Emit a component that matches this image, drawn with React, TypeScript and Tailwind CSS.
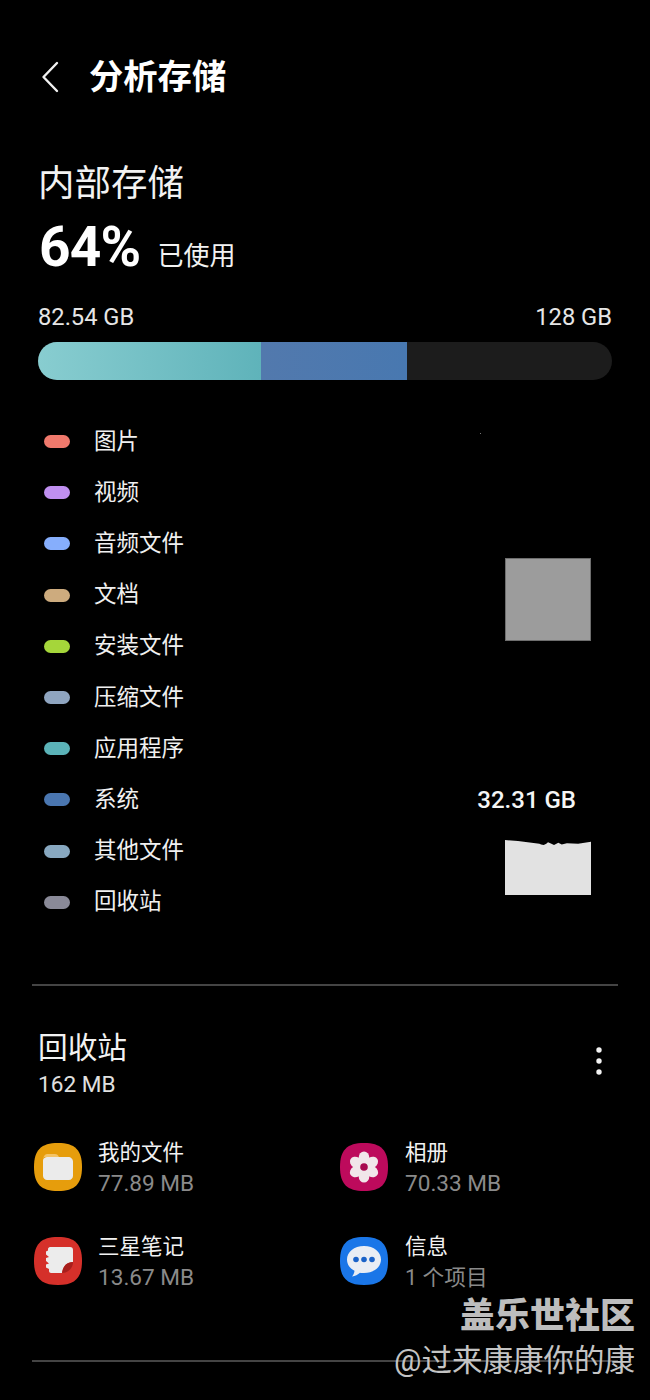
const cjk = "font-['Roboto','Noto_Sans_CJK_SC',sans-serif]";

const legend: [string, string][] = [
  ["图片", "bg-[#f0796c]"],
  ["视频", "bg-[#c08ff0]"],
  ["音频文件", "bg-[#86aefc]"],
  ["文档", "bg-[#cdab7e]"],
  ["安装文件", "bg-[#a5d63a]"],
  ["压缩文件", "bg-[#8fa5c0]"],
  ["应用程序", "bg-[#5bb3b8]"],
  ["系统", "bg-[#4a76b0]"],
  ["其他文件", "bg-[#88a8c0]"],
  ["回收站", "bg-[#8a8a98]"],
];

const squircle = "M24 0C41 0 48 7 48 24S41 48 24 48 0 41 0 24 7 0 24 0Z";

function FolderIcon() {
  return (
    <svg width="48" height="48" viewBox="0 0 48 48">
      <path d={squircle} fill="#e69d0c" />
      <path d="M9 17c0-3 2-6 4-6h8c2 0 3 1 4 3h-16Z" fill="#f4c467" />
      <path d="M9 18c0-3 2-4 5-4h20c3 0 5 2 5 5v14c0 2-2 4-4 4H13c-2 0-4-2-4-4Z" fill="#ebebeb" />
    </svg>
  );
}

function FlowerIcon() {
  const petals = [0, 60, 120, 180, 240, 300];
  return (
    <svg width="48" height="48" viewBox="0 0 48 48">
      <path d={squircle} fill="#bd0a5c" />
      {petals.map((a) => (
        <ellipse key={a} cx="24" cy="15" rx="5.400" ry="6.600" fill="#f1e6ea" transform={`rotate(${a} 24 24)`} />
      ))}
      <circle cx="24" cy="24" r="3.800" fill="#a80a50" />
    </svg>
  );
}

function NotesIcon() {
  return (
    <svg width="48" height="48" viewBox="0 0 48 48">
      <path d={squircle} fill="#d5302a" />
      <path d="M14 12c0-1 1-2 2-2h20c2 0 3 1 3 3v12c-6 0-10 4-11 11H17c-1 0-2-1-2-2v-2l-3-1.500v-3l3-1-3-2.500v-3l3-1-3-2.500v-3l2-1Z" fill="#ececec" />
      <path d="M39 25c0 6-5 11-11 11 1-7 5-11 11-11Z" fill="#a81f1c" />
    </svg>
  );
}

function MessageIcon() {
  return (
    <svg width="48" height="48" viewBox="0 0 48 48">
      <path d={squircle} fill="#1a76e8" />
      <path d="M24 9c10 0 17 6 17 13.500S34 36 24 36c-2 0-3 0-4-.3-2 2-5 3.300-8 3.800 1.500-1.800 2.300-3.500 2.500-5.800C10 31.500 7 27.500 7 22.500 7 15 14 9 24 9Z" fill="#e9edf4" />
      <circle cx="16" cy="22.500" r="2.800" fill="#1a62c8" />
      <circle cx="24" cy="22.500" r="2.800" fill="#1a62c8" />
      <circle cx="32" cy="22.500" r="2.800" fill="#1a62c8" />
    </svg>
  );
}

function AppItem({ icon, name, size, wide, small }: { icon: React.ReactNode; name: string; size: string; wide?: boolean; small?: boolean }) {
  return (
    <div className="flex h-[94px] items-start">
      <div className="mt-[6px] h-12 w-12 shrink-0">{icon}</div>
      <div className={`flex flex-col ${wide ? "ml-[17px]" : "ml-4"}`}>
        <span className="text-[21.5px] leading-[31px] text-[#f2f2f2]">{name}</span>
        <span className={`leading-[31px] text-[#8a8a8a] ${small ? "text-[21.7px]" : "text-[22.6px]"}`}>{size}</span>
      </div>
    </div>
  );
}

export default function App() {
  return (
    <div className={`relative h-[1400px] w-[650px] overflow-hidden bg-black text-white ${cjk}`}>
      {/* header */}
      <div className="flex h-[156px] items-start pl-[41px] pt-[57px]">
        <svg width="18" height="32" viewBox="0 0 18 32" fill="none" className="mt-[4px]">
          <path d="M16 2 2.500 16 16 30" stroke="#f2f2f2" strokeWidth="2.400" strokeLinecap="round" strokeLinejoin="round" />
        </svg>
        <h1 className="ml-[30px] text-[34.3px] font-bold leading-[40px]">分析存储</h1>
      </div>

      {/* summary */}
      <div className="pl-[38px]">
        <div className="text-[36.5px] leading-[56px] text-[#f2f2f2]">内部存储</div>
        <div className="mt-[2px] flex h-[66px] items-end pl-px">
          <span className="text-[55px] font-bold leading-[66px] tracking-[-0.8px]">64%</span>
          <span className="mb-[6px] ml-[17px] text-[26px] leading-[36px] text-[#f2f2f2]">已使用</span>
        </div>
      </div>

      {/* capacity */}
      <div className="mt-[22px] px-[38px]">
        <div className="flex h-[32px] items-center justify-between text-[23.7px] text-[#e6e6e6]">
          <span>82.54 GB</span>
          <span>128 GB</span>
        </div>
        <div className="mt-[8px] flex h-[38px] w-[574px] overflow-hidden rounded-full bg-[#1c1c1c]">
          <div className="h-full w-[223px] bg-gradient-to-r from-[#88cdd0] to-[#5fb3ba]" />
          <div className="h-full w-[146px] bg-gradient-to-r from-[#5279ad] to-[#4878b0]" />
        </div>
      </div>

      {/* legend */}
      <div className="mt-[36px] pl-[44px] pr-[74px]">
        {legend.map(([label, color]) => (
          <div key={label} className="flex h-[51.2px] items-center">
            <span className={`h-[13px] w-[26px] rounded-full ${color}`} />
            <span className="ml-[24px] flex-1 text-[22.5px] text-[#f0f0f0]">{label}</span>
            {label === "系统" && <span className="text-[24px] font-medium text-[#f5f5f5]">32.31 GB</span>}
          </div>
        ))}
      </div>

      {/* divider */}
      <div className="mx-[32px] mt-[56px] h-[2px] bg-[#444444]" />

      {/* trash */}
      <div className="flex items-start justify-between pl-[38px] pr-[44px] pt-[39px]">
        <div>
          <div className="text-[29.7px] leading-[46px] text-[#f2f2f2]">回收站</div>
          <div className="text-[22.6px] leading-[28px] text-[#e0e0e0]">162 MB</div>
        </div>
        <svg width="14" height="28" viewBox="0 0 14 28" className="mt-[22px]">
          <circle cx="7" cy="3" r="2.700" fill="#f2f2f2" />
          <circle cx="7" cy="14" r="2.700" fill="#f2f2f2" />
          <circle cx="7" cy="25" r="2.700" fill="#f2f2f2" />
        </svg>
      </div>

      <div className="mt-[38px] grid grid-cols-[306px_1fr] pl-[34px]">
        <AppItem icon={<FolderIcon />} name="我的文件" size="77.89 MB" />
        <AppItem icon={<FlowerIcon />} name="相册" size="70.33 MB" wide />
        <AppItem icon={<NotesIcon />} name="三星笔记" size="13.67 MB" />
        <AppItem icon={<MessageIcon />} name="信息" size="1 个项目" wide small />
      </div>

      <div className="mx-[32px] mt-[35px] h-[2px] bg-[#444444]" />

      {/* redaction patches */}
      <div className="absolute left-[505px] top-[558px] h-[83px] w-[86px] border border-[#6e6e6e] bg-[#9c9c9c]" />
      <div className="absolute left-[505px] top-[840px] h-[55px] w-[86px] bg-[#e2e2e2] [clip-path:polygon(0_0,15%_2%,40%_7%,42%_8%,45%_9%,48%_7%,50%_4%,54%_7%,57%_9%,62%_5%,66%_8%,72%_6%,85%_7%,100%_3%,100%_100%,0_100%)]" />
      <div className="absolute left-[480px] top-[433px] h-px w-px bg-[#777777]" />

      {/* watermark */}
      <div className="absolute right-[15px] top-[1295px] flex flex-col items-end">
        <span className="text-[35px] font-black leading-[44px] text-[#bdbdbd]">盖乐世社区</span>
        <span className="text-[30.5px] leading-[44px] text-[#c4c4c4]">@过来康康你的康</span>
      </div>
    </div>
  );
}
